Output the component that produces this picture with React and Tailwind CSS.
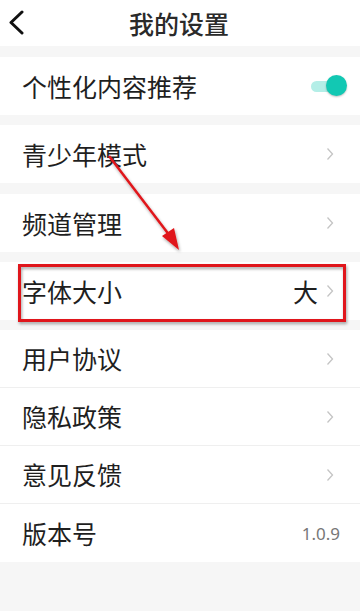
import React from 'react';

const font = { fontFamily: '"Noto Sans CJK SC", "Noto Sans", sans-serif' };

const Chevron = () => (
  <svg width="8" height="14" viewBox="0 0 8 14" className="shrink-0">
    <path d="M1.5 1.5 L6.5 7 L1.5 12.5" fill="none" stroke="#c4c4c4" strokeWidth="1.3" />
  </svg>
);

const Row = ({ label, children, divider }) => (
  <div className={`h-[58px] bg-white flex items-center justify-between pl-[22px] pr-[26px] ${divider ? 'border-b border-[#efefef]' : ''}`}>
    <span className="text-[25px] text-[#1f1f1f] leading-none">{label}</span>
    <div className="flex items-center gap-[8px]">{children}</div>
  </div>
);

const App = () => {
  return (
    <div className="relative w-[360px] h-[611px] bg-[#f6f6f6] overflow-hidden" style={font}>
      <div className="h-[46px] bg-white flex items-center relative">
        <svg width="18" height="26" viewBox="0 0 18 26" className="absolute left-[8px] top-[10px]">
          <path d="M14 2 L3 12.5 L14 23" fill="none" stroke="#111" strokeWidth="3" strokeLinecap="round" strokeLinejoin="round" />
        </svg>
        <div className="flex-1 text-center text-[25px] text-[#2a2a2a] font-medium leading-none pr-[2px]">我的设置</div>
      </div>

      <div className="h-[11px]" />
      <Row label="个性化内容推荐">
        <div className="relative w-[36px] h-[22px] mr-[-13px]">
          <div className="absolute left-0 top-[6px] w-[28px] h-[11px] rounded-full bg-[#b4eee7]" />
          <div className="absolute right-0 top-0 w-[21px] h-[21px] rounded-full bg-[#12c8b3] shadow-[0_1px_2px_rgba(0,0,0,0.25)]" />
        </div>
      </Row>
      <div className="h-[10px]" />
      <Row label="青少年模式"><Chevron /></Row>
      <div className="h-[11px]" />
      <Row label="频道管理"><Chevron /></Row>
      <div className="h-[10px]" />
      <Row label="字体大小">
        <span className="text-[25px] text-[#1f1f1f] leading-none">大</span>
        <Chevron />
      </Row>
      <div className="h-[10px]" />
      <Row label="用户协议" divider><Chevron /></Row>
      <Row label="隐私政策" divider><Chevron /></Row>
      <Row label="意见反馈" divider><Chevron /></Row>
      <div className="h-[58px] bg-white flex items-center justify-between pl-[22px] pr-[20px]">
        <span className="text-[25px] text-[#1f1f1f] leading-none">版本号</span>
        <span className="text-[17px] text-[#777] leading-none" style={{ fontFamily: '"Noto Sans", sans-serif' }}>1.0.9</span>
      </div>

      {/* annotation overlay */}
      <svg className="absolute left-0 top-0 pointer-events-none" width="360" height="611" viewBox="0 0 360 611">
        <defs>
          <filter id="sh" x="-10%" y="-10%" width="120%" height="130%">
            <feDropShadow dx="1" dy="2" stdDeviation="1.5" floodColor="#000" floodOpacity="0.35" />
          </filter>
        </defs>
        <g filter="url(#sh)">
          <line x1="109" y1="156" x2="170" y2="236" stroke="#e0161a" strokeWidth="2.5" />
          <polygon points="179,250 162,236 174,228" fill="#e0161a" />
          <rect x="19.5" y="265.5" width="325" height="55" fill="none" stroke="#e0161a" strokeWidth="3" />
        </g>
      </svg>
    </div>
  );
};

export default App;
